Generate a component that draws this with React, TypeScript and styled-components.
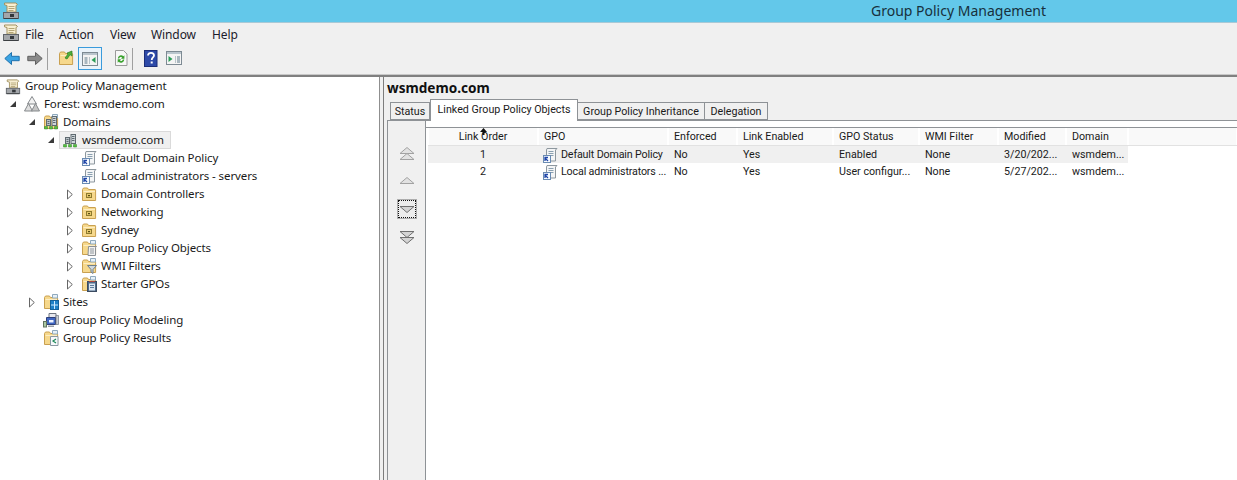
import React from "react";
import styled, { createGlobalStyle } from "styled-components";

const Global = createGlobalStyle`
  html, body { margin: 0; padding: 0; background: #f0f0f0; overflow: hidden; }
  #root { width: 1237px; height: 480px; }
  * { box-sizing: border-box; }
`;

const FONT = `"Noto Sans", "Open Sans", "Liberation Sans", sans-serif`;

const Win = styled.div`
  width: 1237px; height: 480px; display: flex; flex-direction: column; overflow: hidden;
  background: #f0f0f0; font-family: ${FONT}; font-size: 11.5px; color: #1a1a1a; letter-spacing: -0.1px;
`;
const TitleBar = styled.div`
  height: 23px; flex: none; background: #63c8ea; border-bottom: 1px solid #a9c9d6;
  display: flex; align-items: center; justify-content: space-between; padding: 0 191px 0 2px;
`;
const TitleText = styled.div`
  font-size: 14px; color: #17303c; letter-spacing: 0; line-height: 22px; margin-top: -1px;
`;
const MenuBar = styled.div`
  height: 22px; flex: none; display: flex; align-items: center; padding-left: 2px; font-size: 12px;
`;
const MenuIconBox = styled.div`
  width: 23px; height: 20px; flex: none;
`;
const MenuItem = styled.div<{ $w: number }>`
  width: ${p => p.$w}px; flex: none; color: #1b1b2b;
`;
const ToolBar = styled.div`
  height: 30px; flex: none; display: flex; align-items: center; padding: 0 0 2px 4px;
  border-bottom: 1px solid #c8c8c8;
`;
const ToolIcon = styled.div<{ $mr?: number }>`
  width: 16px; height: 17px; flex: none; margin-right: ${p => p.$mr ?? 0}px; display: flex;
`;
const ToolSep = styled.div<{ $mr: number }>`
  width: 1px; height: 22px; background: #a0a0a0; flex: none; margin-right: ${p => p.$mr}px;
`;
const ToolActive = styled.div`
  width: 24px; height: 23px; flex: none; border: 1px solid #3a9bdc; background: #eaf3fa;
  display: flex; align-items: center; justify-content: center; margin-right: 11px;
`;
const Body = styled.div`
  flex: 1; min-height: 0; display: flex; border-top: 2px solid #808080;
`;
const TreePane = styled.div`
  width: 380px; flex: none; background: #fff; border-right: 1px solid #8f8f8f;
`;
const Splitter = styled.div`
  width: 3px; flex: none; background: #f0f0f0;
`;
const Row = styled.div<{ $level: number }>`
  height: 18px; display: flex; align-items: center;
  padding-left: ${p => (p.$level === 0 ? 5 : 5 + (p.$level - 1) * 19)}px;
`;
const Expander = styled.div`
  width: 19px; height: 18px; flex: none; display: flex; align-items: center; padding-left: 5px;
`;
const Node = styled.div<{ $sel?: boolean }>`
  display: flex; align-items: center; gap: 4px; height: 18px;
  ${p => p.$sel ? `background: #f0f0f0; outline: 1px solid #dadada; outline-offset: -1px; margin-left: -3px; padding: 0 7px 0 3px;` : ""}
`;
const NodeIcon = styled.div`
  width: 16px; height: 16px; flex: none; display: flex;
`;
const NodeLabel = styled.div`
  white-space: nowrap; line-height: 18px;
`;
const Detail = styled.div`
  flex: 1; min-width: 0; display: flex; flex-direction: column; border-left: 1px solid #7d7d7d; padding-left: 3px;
  background: #f0f0f0; font-family: Roboto, "Noto Sans", sans-serif; font-size: 10.7px; letter-spacing: 0;
`;
const DetailTitle = styled.div`
  height: 22px; flex: none; font-family: ${FONT}; font-size: 13.6px; font-weight: 700; color: #101010; line-height: 22px;
`;
const Tabs = styled.div`
  height: 21px; flex: none; display: flex; align-items: flex-end; padding-left: 3px; position: relative; z-index: 1;
`;
const Tab = styled.div<{ $w: number; $active?: boolean }>`
  width: ${p => p.$w}px; flex: none; white-space: nowrap; border: 1px solid #8e9296; text-align: center;
  ${p => p.$active
    ? `height: 22px; background: #fff; border-bottom: 0; line-height: 19px; margin-bottom: -1px;`
    : `height: 18px; background: #f0f0f0; line-height: 18px; margin-left: -1px;`}
  &:first-child { margin-left: 0; }
`;
const TabBody = styled.div`
  flex: 1; min-height: 0; display: flex; background: #fff; border-top: 1px solid #8e9296; border-left: 1px solid #8e9296;
`;
const SideButtons = styled.div`
  width: 38px; flex: none; padding: 23px 0 0 1px; display: flex; flex-direction: column; align-items: center;
  border-right: 1px solid #8e9296; background: #f0f0f0;
`;
const MoveBtn = styled.div<{ $h: number; $focus?: boolean }>`
  width: 20px; height: 20px; flex: none; margin-bottom: ${p => p.$h}px; display: flex; align-items: center; justify-content: center;
  ${p => p.$focus ? `outline: 1px dotted #111; outline-offset: -2px; border: 1px solid #adadad; background: #ececec;` : ""}
`;
const ListArea = styled.div`
  flex: 1; min-width: 0; margin-top: 6px; border-top: 1px solid #8e9296; padding-left: 2px;
`;
const COLS = "110px 130px 69px 96px 86px 79px 68px 62px";
const Head = styled.div`
  display: grid; grid-template-columns: ${COLS} 1fr; height: 18px; background: #f9f9f9; border-bottom: 1px solid #e2e2e2;
`;
const HeadCell = styled.div<{ $center?: boolean }>`
  border-right: 1px solid #fff; border-left: 1px solid #fff; line-height: 17px; white-space: nowrap; position: relative;
  padding-left: ${p => (p.$center ? 0 : 5)}px; text-align: ${p => (p.$center ? "center" : "left")};
`;
const SortArrow = styled.div`
  position: absolute; left: 50px; top: 0; width: 9px; height: 7px; display: flex;
`;
const TRow = styled.div<{ $sel?: boolean }>`
  display: grid; grid-template-columns: ${COLS}; width: 700px; height: 17px;
  ${p => p.$sel ? "background: #f0f0f0;" : ""}
`;
const Cell = styled.div<{ $center?: boolean; $icon?: boolean }>`
  line-height: 17px; white-space: nowrap; overflow: hidden;
  padding-left: ${p => (p.$center ? 0 : p.$icon ? 4 : 6)}px; text-align: ${p => (p.$center ? "center" : "left")};
  ${p => p.$icon ? "display: flex; align-items: center; gap: 3px; letter-spacing: -0.15px;" : ""}
`;

/* ---------- icons ---------- */
const Svg: React.FC<{ s?: number; h?: number; children: React.ReactNode }> = ({ s = 16, h, children }) => (
  <svg width={s} height={h ?? s} viewBox={`0 0 ${s} ${h ?? s}`} style={{ display: "block" }}>{children}</svg>
);

const Console = () => (
  <Svg s={18}>
    <path d="M2.500 1h11.500l1.500 1.500-1.500 1V10H5V3.500L2.500 2.800z" fill="#f8efd2" stroke="#a39260" />
    <path d="M6.500 4.500h6M6.500 6.500h6M6.500 8.500h5" stroke="#b5a678" />
    <rect x="1.500" y="10.500" width="15" height="6" fill="#a3a6aa" stroke="#60646a" />
    <rect x="8" y="12" width="4" height="3" fill="#33373b" />
    <path d="M2 16.500h14" stroke="#3c3f42" />
  </Svg>
);
const ArrowL = ({ c, d }: { c: string; d: string }) => (
  <Svg><path d="M.8 8.500 7.500 2.500v3.800h7.700v4.400H7.500v3.800z" fill={c} stroke={d} /></Svg>
);
const ArrowR = ({ c, d }: { c: string; d: string }) => (
  <Svg><path d="M15.200 8.500 8.500 2.500v3.800H.8v4.400h7.700v3.800z" fill={c} stroke={d} /></Svg>
);
const FolderBase = ({ tag, children }: { tag?: boolean; children?: React.ReactNode }) => (
  <Svg>
    <path d="M1.500 3.500 2.500 2h4l1 1.500h6.500a.6.6 0 0 1 .6.6v10.400H1.500z" fill="#f6d88c" stroke="#c9a050" />
    <path d="M2.500 5.500h11.500" stroke="#fcedc4" />
    {tag && <path d="M9.500 .5h5v3.500h-5z" fill="#e6f0f7" stroke="#8fa9bd" />}
    {children}
  </Svg>
);
const FolderUp = () => (
  <FolderBase>
    <path d="M7 8 10 4 9 3l5-2 0 5-2-1.300-3 4.300z" fill="#4fb03a" stroke="#2c7d23" strokeWidth=".7" />
  </FolderBase>
);
const WinPane = ({ left }: { left?: boolean }) => (
  <Svg>
    <rect x=".5" y="1.500" width="15" height="13" fill="#f4f4f4" stroke="#7d8a93" />
    <path d="M1 2h14v2H1z" fill="#b9c5cd" />
    {left ? (
      <>
        <path d="M2.500 6h3v7h-3zM7 6h.8v7H7z" fill="#a9b7bf" />
        <path d="M13.500 6v6L9.500 9z" fill="#2a9d57" />
      </>
    ) : (
      <>
        <path d="M2.500 6v6l4-3z" fill="#2a9d57" />
        <path d="M9 6h.8v7H9zM11 6h3v7h-3z" fill="#a9b7bf" />
      </>
    )}
  </Svg>
);
const Refresh = () => (
  <Svg>
    <path d="M2.500 .5h8l3.500 3.500v11.500H2.500z" fill="#f7f7f7" stroke="#9a9a9a" />
    <path d="M4.800 8.500a3.300 3.300 0 0 1 5.600-2.300l1-.9v3.400H8l1.200-1.200a1.800 1.800 0 0 0-3 1zM11.300 9.500a3.300 3.300 0 0 1-5.600 2.300l-1 .9V9.300h3.400L6.900 10.500a1.800 1.800 0 0 0 3-1z" fill="#3ba22f" />
  </Svg>
);
const Help = () => (
  <Svg s={14} h={17}>
    <rect x=".5" y=".5" width="12.500" height="16" fill="#2e4aa8" stroke="#1c2e78" />
    <path d="M4 5.500c0-3.500 6-3.500 6 0 0 2-2.300 2-2.300 4.500" fill="none" stroke="#fff" strokeWidth="1.800" />
    <rect x="6.700" y="11.500" width="2" height="2" fill="#fff" />
  </Svg>
);
const Forest = () => (
  <Svg>
    <path d="M8 .5 12.500 8h-9z" fill="#f2f2f2" stroke="#85898c" />
    <path d="M4.500 7.500 8.500 15H.5z" fill="#dedede" stroke="#85898c" />
    <path d="M11.500 7.500 15.500 15h-8z" fill="#c6c6c6" stroke="#85898c" />
  </Svg>
);
const Servers = () => (
  <>
    <rect x="3.500" y="5.500" width="4" height="6" fill="#b9c2c7" stroke="#5f6a70" />
    <rect x="9" y="2.500" width="4.500" height="9" fill="#cfd6da" stroke="#5f6a70" />
    <path d="M4.500 7.500h2M4.500 9.500h2M10 4.500h2.500M10 6.500h2.500M10 8.500h2.500" stroke="#5f6a70" />
    <path d="M1.500 15h3v-2.500h-3zM6.500 15h3v-2.500h-3zM11.500 15h3v-2.500h-3z" fill="#55c23f" stroke="#2f7f27" strokeWidth=".5" />
  </>
);
const DomainIcon = () => <Svg><Servers /></Svg>;
const DomainsFolder = () => <FolderBase tag><Servers /></FolderBase>;
const Gpo = () => (
  <Svg>
    <path d="M5 1.500h10l-1.500 1.500v11H4.500V3z" fill="#f4f5f6" stroke="#8d979e" />
    <path d="M6.500 4.500h5M6.500 6.500h5M6.500 8.500h5" stroke="#8aa0b0" />
    <rect x="1.500" y="8.500" width="7" height="7" fill="#f7fbff" stroke="#6a8bb2" />
    <path d="M3 14V11l3 3M6 10.500H3.500V12.500" fill="none" stroke="#1f45a8" strokeWidth="1.300" />
  </Svg>
);
const OuFolder = () => (
  <FolderBase>
    <rect x="5.500" y="7.500" width="5" height="4" fill="#e7c96b" stroke="#8e7a2e" />
    <rect x="7" y="9" width="2" height="1.200" fill="#5a4d14" />
  </FolderBase>
);
const GpoFolder = () => (
  <FolderBase tag>
    <path d="M7.500 6.500h8l-1 1v8H7z" fill="#f1f1f1" stroke="#8a8f94" />
    <path d="M9 9h4M9 11h4M9 13h4" stroke="#8f979d" />
  </FolderBase>
);
const WmiFolder = () => (
  <FolderBase tag>
    <path d="M6.500 7.500h9l-3.500 4v4l-2-1.500v-2.500z" fill="#cfd8de" stroke="#6f7f8b" />
  </FolderBase>
);
const StarterFolder = () => (
  <FolderBase tag>
    <rect x="6.500" y="5.500" width="9" height="10" fill="#4d6a8a" stroke="#3b4b60" />
    <rect x="8" y="7.500" width="6" height="7" fill="#dbe6f0" />
    <path d="M9 9.500h4M9 11.500h4" stroke="#5f7d9d" />
    <path d="M8 5.500h6" stroke="#b5473a" />
  </FolderBase>
);
const SitesFolder = () => (
  <FolderBase tag>
    <rect x="7.500" y="6.500" width="8" height="9" fill="#1f80c7" stroke="#14609a" />
    <path d="M11.500 7v8M8 11h7" stroke="#cfeaff" />
  </FolderBase>
);
const Modeling = () => (
  <Svg>
    <path d="M6 1.500h7v5H6z" fill="#e8e8ee" stroke="#6d7480" />
    <path d="M3.500 5.500h9v7h-9z" fill="#3f66c2" stroke="#2d3f7a" />
    <path d="M6 8h4.500v2.500H6z" fill="#eef3ff" />
    <path d="M13 3.500h2.500v9H13z" fill="#c9ccd2" stroke="#6d7480" strokeWidth=".7" />
    <rect x=".5" y="9.500" width="3" height="5.500" fill="#a9c7a3" stroke="#61735e" />
    <path d="M5 13.500h6v1.500H5z" fill="#9aa0a8" />
  </Svg>
);
const Results = () => (
  <FolderBase tag>
    <path d="M7.500 6.500h7.500v9H7.500z" fill="#f7f9fb" stroke="#8a98a3" />
    <path d="M13 9 10 11l3 2" fill="none" stroke="#1e8a5a" strokeWidth="1.200" />
  </FolderBase>
);
const Open = () => (
  <Svg s={7} h={8}><path d="M6 1v6H0z" fill="#3a3a3a" /></Svg>
);
const Closed = () => (
  <Svg s={6} h={11}><path d="M.5 1 5.300 5.500.5 10z" fill="#fff" stroke="#666" /></Svg>
);

const Tri = ({ y, up, h = 6 }: { y: number; up: boolean; h?: number }) =>
  up
    ? <path d={`M8 ${y} 15 ${y + h}H1z`} fill="#e2e2e2" stroke="#a2a2a2" />
    : <path d={`M1 ${y}H15L8 ${y + h}z`} fill="#d4d4d4" stroke="#707070" />;

const Move = ({ kind }: { kind: "top" | "up" | "down" | "bottom" }) => (
  <Svg s={16} h={16}>
    {kind === "top" && (<><Tri y={1.5} up /><Tri y={7.5} up /></>)}
    {kind === "up" && <Tri y={4.5} up />}
    {kind === "down" && <Tri y={5.5} up={false} />}
    {kind === "bottom" && (<><Tri y={2.5} up={false} /><Tri y={8.5} up={false} /></>)}
  </Svg>
);

/* ---------- data ---------- */
type TreeItem = { level: number; label: string; icon: React.ReactNode; exp?: "open" | "closed"; sel?: boolean };
const TREE: TreeItem[] = [
  { level: 0, label: "Group Policy Management", icon: <Console /> },
  { level: 1, label: "Forest: wsmdemo.com", icon: <Forest />, exp: "open" },
  { level: 2, label: "Domains", icon: <DomainsFolder />, exp: "open" },
  { level: 3, label: "wsmdemo.com", icon: <DomainIcon />, exp: "open", sel: true },
  { level: 4, label: "Default Domain Policy", icon: <Gpo /> },
  { level: 4, label: "Local administrators - servers", icon: <Gpo /> },
  { level: 4, label: "Domain Controllers", icon: <OuFolder />, exp: "closed" },
  { level: 4, label: "Networking", icon: <OuFolder />, exp: "closed" },
  { level: 4, label: "Sydney", icon: <OuFolder />, exp: "closed" },
  { level: 4, label: "Group Policy Objects", icon: <GpoFolder />, exp: "closed" },
  { level: 4, label: "WMI Filters", icon: <WmiFolder />, exp: "closed" },
  { level: 4, label: "Starter GPOs", icon: <StarterFolder />, exp: "closed" },
  { level: 2, label: "Sites", icon: <SitesFolder />, exp: "closed" },
  { level: 2, label: "Group Policy Modeling", icon: <Modeling /> },
  { level: 2, label: "Group Policy Results", icon: <Results /> },
];
const MENUS: [string, number][] = [["File", 34], ["Action", 51], ["View", 41], ["Window", 61], ["Help", 40]];
const HEADS = ["GPO", "Enforced", "Link Enabled", "GPO Status", "WMI Filter", "Modified", "Domain"];
const ROWS = [
  { n: "1", gpo: "Default Domain Policy", st: "Enabled", mod: "3/20/202...", sel: true },
  { n: "2", gpo: "Local administrators ...", st: "User configur...", mod: "5/27/202...", sel: false },
];

export default function App() {
  return (
    <Win>
      <Global />
      <TitleBar>
        <Console />
        <TitleText>Group Policy Management</TitleText>
      </TitleBar>
      <MenuBar>
        <MenuIconBox><Console /></MenuIconBox>
        {MENUS.map(([m, w]) => <MenuItem key={m} $w={w}>{m}</MenuItem>)}
      </MenuBar>
      <ToolBar>
        <ToolIcon $mr={7}><ArrowL c="#3aa3e3" d="#2172ad" /></ToolIcon>
        <ToolIcon $mr={4}><ArrowR c="#8a8a8a" d="#5f5f5f" /></ToolIcon>
        <ToolSep $mr={10} />
        <ToolIcon $mr={4}><FolderUp /></ToolIcon>
        <ToolActive><WinPane left /></ToolActive>
        <ToolIcon $mr={3}><Refresh /></ToolIcon>
        <ToolSep $mr={11} />
        <ToolIcon $mr={6}><Help /></ToolIcon>
        <ToolIcon><WinPane /></ToolIcon>
      </ToolBar>
      <Body>
        <TreePane>
          {TREE.map(t => (
            <Row key={t.label + t.level} $level={t.level}>
              {t.level > 0 && (
                <Expander>{t.exp === "open" ? <Open /> : t.exp === "closed" ? <Closed /> : null}</Expander>
              )}
              <Node $sel={t.sel}>
                <NodeIcon>{t.icon}</NodeIcon>
                <NodeLabel>{t.label}</NodeLabel>
              </Node>
            </Row>
          ))}
        </TreePane>
        <Splitter />
        <Detail>
          <DetailTitle>wsmdemo.com</DetailTitle>
          <Tabs>
            <Tab $w={40}>Status</Tab>
            <Tab $w={148} $active>Linked Group Policy Objects</Tab>
            <Tab $w={128}>Group Policy Inheritance</Tab>
            <Tab $w={64}>Delegation</Tab>
          </Tabs>
          <TabBody>
            <SideButtons>
              <MoveBtn $h={7}><Move kind="top" /></MoveBtn>
              <MoveBtn $h={8}><Move kind="up" /></MoveBtn>
              <MoveBtn $h={8} $focus><Move kind="down" /></MoveBtn>
              <MoveBtn $h={0}><Move kind="bottom" /></MoveBtn>
            </SideButtons>
            <ListArea>
              <Head>
                <HeadCell $center>
                  Link Order
                  <SortArrow>
                    <Svg s={9} h={7}><path d="M4.500 0 8 4H5.500v3h-2V4H1z" fill="#111" /></Svg>
                  </SortArrow>
                </HeadCell>
                {HEADS.map(h => <HeadCell key={h}>{h}</HeadCell>)}
                <HeadCell />
              </Head>
              {ROWS.map(r => (
                <TRow key={r.n} $sel={r.sel}>
                  <Cell $center>{r.n}</Cell>
                  <Cell $icon><NodeIcon><Gpo /></NodeIcon>{r.gpo}</Cell>
                  <Cell>No</Cell>
                  <Cell>Yes</Cell>
                  <Cell>{r.st}</Cell>
                  <Cell>None</Cell>
                  <Cell>{r.mod}</Cell>
                  <Cell>wsmdem...</Cell>
                </TRow>
              ))}
            </ListArea>
          </TabBody>
        </Detail>
      </Body>
    </Win>
  );
}
